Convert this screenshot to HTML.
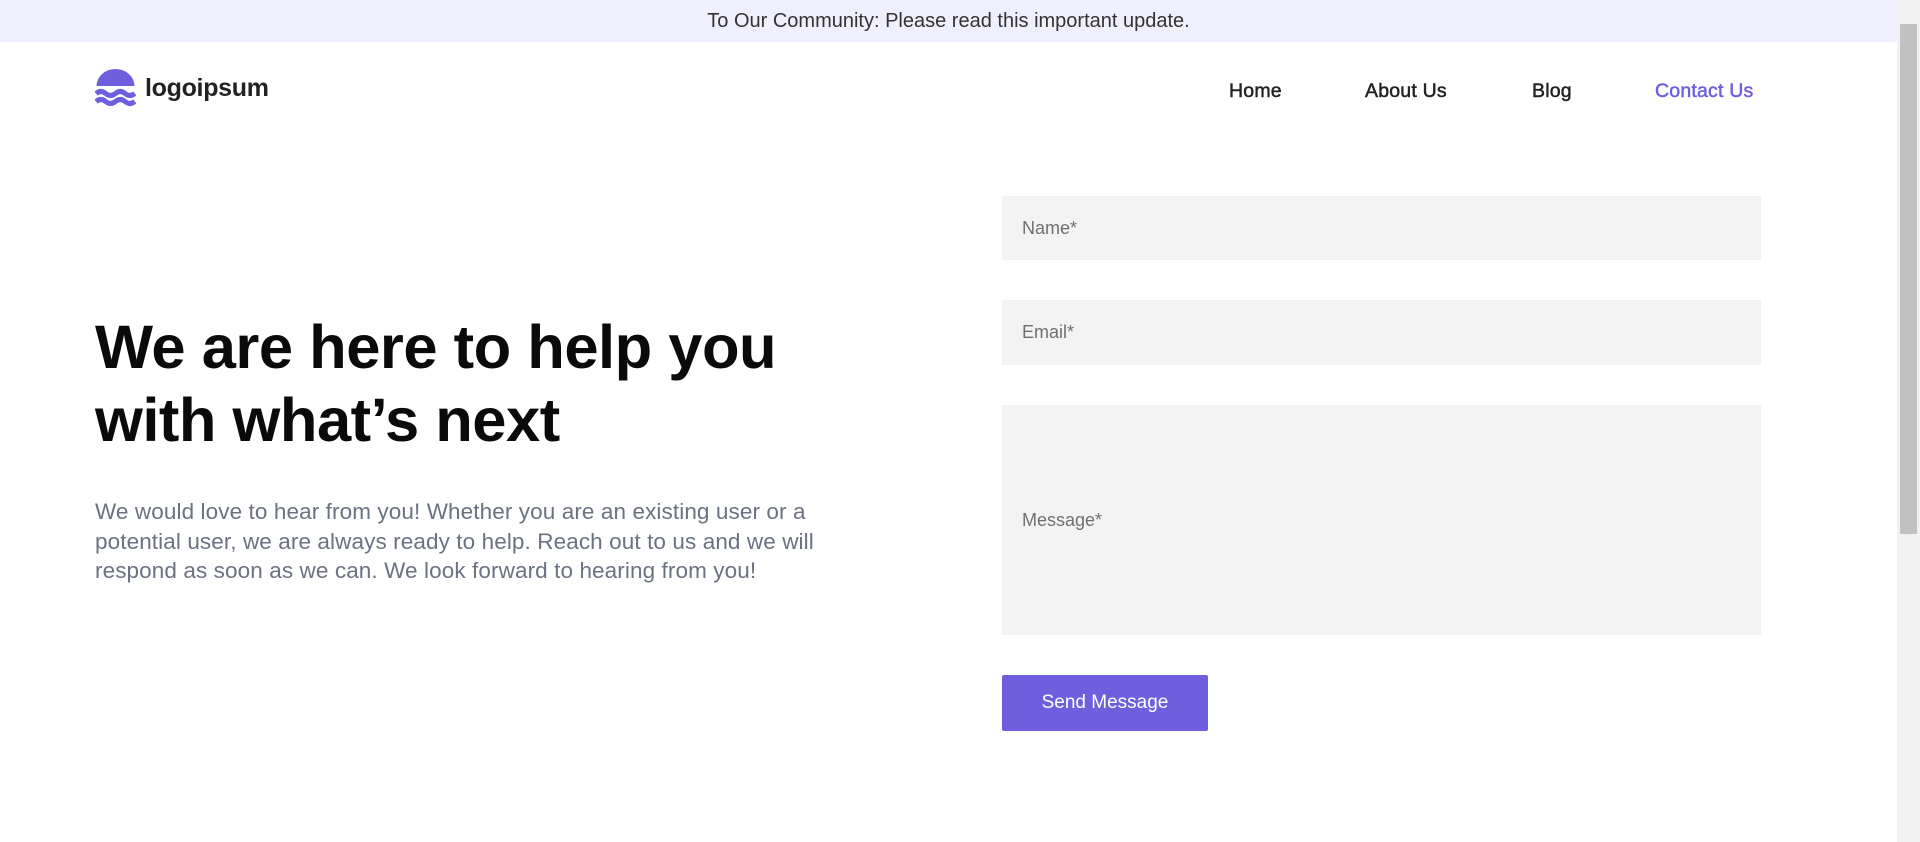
<!DOCTYPE html>
<html><head><meta charset="utf-8"><style>
*{margin:0;padding:0;box-sizing:border-box}
body{width:1920px;height:842px;overflow:hidden;background:#fff;font-family:"Liberation Sans",sans-serif;position:relative}
.banner{position:absolute;left:0;top:0;width:1897px;height:42px;background:#f0effd;color:#333;font-size:20px;text-align:center;line-height:43px}
.sb{position:absolute;right:0;top:0;width:23px;height:842px;background:#f1f1f1}
.sb .th{position:absolute;left:3px;right:3px;top:24px;height:510px;background:#c1c1c1}
.logo{position:absolute;left:95px;top:69px;display:flex;align-items:center}
.logo span{font-size:25px;font-weight:bold;color:#222;margin-left:9px;letter-spacing:-0.3px}
.nav a{position:absolute;top:80px;font-size:19.5px;color:#222;text-decoration:none;-webkit-text-stroke:0.5px #222;letter-spacing:0.2px}
h1{position:absolute;left:95px;top:311px;font-size:61.5px;line-height:73px;font-weight:bold;color:#0a0a0a;letter-spacing:-0.5px}
p{position:absolute;left:95px;top:497px;width:745px;font-size:22.5px;line-height:29.5px;color:#6b7280;letter-spacing:0.1px}
.f{position:absolute;left:1002px;width:759px;background:#f3f3f3;color:#707070;font-size:18px;padding-left:20px}
.btn{position:absolute;left:1002px;top:675px;width:206px;height:56px;background:#6f5fde;color:#fff;font-size:19px;text-align:center;line-height:56px;border-radius:2px}
</style></head><body>
<div class="banner">To Our Community: Please read this important update.</div>
<div class="sb"><div class="th"></div></div>
<div class="logo"><svg width="41" height="38" viewBox="0 0 41 38"><path d="M1.5 17A19 17 0 0 1 39.5 17Z" fill="#6f5fde"/><path d="M1 24.5q5-4 9.7 0t9.7 0t9.7 0t9.7 0M1 32.5q5-4 9.7 0t9.7 0t9.7 0t9.7 0" fill="none" stroke="#6f5fde" stroke-width="5"/></svg><span>logoipsum</span></div>
<div class="nav"><a style="left:1229px">Home</a><a style="left:1365px">About Us</a><a style="left:1532px">Blog</a><a style="left:1655px;color:#6f5fde;-webkit-text-stroke:0.5px #6f5fde">Contact Us</a></div>
<h1>We are here to help you<br>with what’s next</h1>
<p>We would love to hear from you! Whether you are an existing user or a potential user, we are always ready to help. Reach out to us and we will respond as soon as we can. We look forward to hearing from you!</p>
<div class="f" style="top:196px;height:64px;line-height:64px">Name*</div>
<div class="f" style="top:300px;height:65px;line-height:65px">Email*</div>
<div class="f" style="top:405px;height:230px;line-height:230px">Message*</div>
<div class="btn">Send Message</div>
</body></html>
